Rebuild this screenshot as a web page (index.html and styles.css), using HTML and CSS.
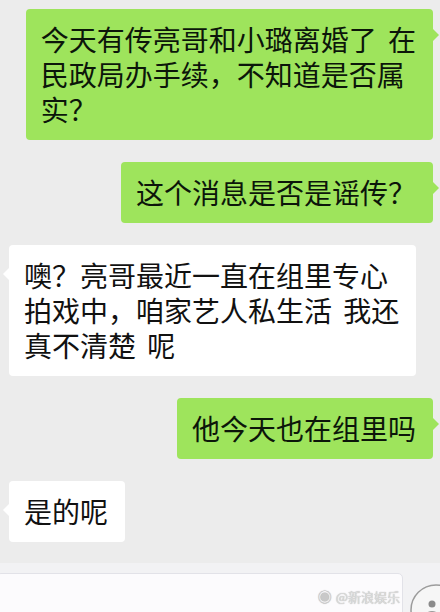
FILE: index.html
```html
<!DOCTYPE html>
<html lang="zh-CN">
<head>
    <meta charset="UTF-8">
    <meta name="viewport" content="width=device-width, initial-scale=1.0">
    <title>聊天记录</title>
    <link rel="stylesheet" href="styles.css">
</head>
<body>
    <div class="chat">
        <!-- 我 -->
        <div class="row me">
            <div class="bubble">今天有传亮哥和小璐离婚了 在<br>民政局办手续，不知道是否属<br>实？</div>
        </div>
        <div class="row me">
            <div class="bubble">这个消息是否是谣传？</div>
        </div>

        <!-- 对方 -->
        <div class="row other">
            <div class="bubble">噢？亮哥最近一直在组里专心<br>拍戏中，咱家艺人私生活 我还<br>真不清楚 呢</div>
        </div>

        <div class="row me">
            <div class="bubble">他今天也在组里吗</div>
        </div>
        <div class="row other">
            <div class="bubble">是的呢</div>
        </div>
    </div>

    <div class="footer">
        <div class="input"></div>
        <div class="mark">
            <span class="mark-logo">◉</span>
            <span class="mark-text">@新浪娱乐</span>
        </div>
        <svg class="avatar" width="44" height="44" viewBox="0 0 44 44">
            <circle cx="28" cy="28" r="25" fill="#f6f6f6" stroke="#9c9c9c" stroke-width="1.5"/>
            <circle cx="24" cy="22" r="3.5" fill="#8a8a8a"/>
            <path d="M16 44 L18 31 Q24 27 30 31 L32 44 Z" fill="#9a9a9a"/>
        </svg>
    </div>
</body>
</html>
```

FILE: styles.css
```css
body {
    margin: 0;
    height: 612px;
    overflow: hidden;
    background-color: #ececec;
    font-family: "Noto Sans CJK SC", "Noto Sans", sans-serif;
    display: flex;
    flex-direction: column;
}

.chat {
    flex: 1;
    display: flex;
    flex-direction: column;
    gap: 22px;
    padding: 9px 7px 0 9px;
}

.row {
    display: flex;
}

.row.me {
    justify-content: flex-end; /* mensagens enviadas à direita */
}

.row.other {
    justify-content: flex-start;
}

.bubble {
    position: relative;
    padding: 13px 17px 13px 15px;
    border-radius: 4px;
    font-size: 28px;
    line-height: 35px;
    word-spacing: 5px;
    color: #111111;
    white-space: nowrap;
}

.me .bubble {
    background-color: #9ee45c;
    color: #0c160a;
}

.other .bubble {
    background-color: #ffffff;
}

/* rabinho do balão */
.bubble::after {
    content: "";
    position: absolute;
    top: 20px;
    border-top: 6px solid transparent;
    border-bottom: 6px solid transparent;
}

.me .bubble::after {
    right: -6px;
    border-left: 6px solid #9ee45c;
}

.other .bubble::after {
    left: -6px;
    top: 23px;
    border-right: 6px solid #ffffff;
}

.footer {
    position: relative;
    height: 49px;
    background-color: #f2f2f4;
    padding-top: 10px;
    box-sizing: border-box;
    overflow: hidden;
}

.input {
    margin-left: -4px;
    width: 405px;
    height: 50px;
    background-color: #fcfbfd;
    border: 1px solid #e2e2e8;
    border-radius: 5px;
}

.mark {
    position: absolute;
    right: 40px;
    bottom: 6px;
    display: flex;
    align-items: center;
    gap: 4px;
    color: #dcdcdc;
    font-size: 13px;
    text-shadow: 0 0 1px #a0a0a0;
}

.mark-logo {
    font-size: 14px;
    color: #c8c8c8;
}

.avatar {
    position: absolute;
    right: -12px;
    bottom: -14px;
}
```
